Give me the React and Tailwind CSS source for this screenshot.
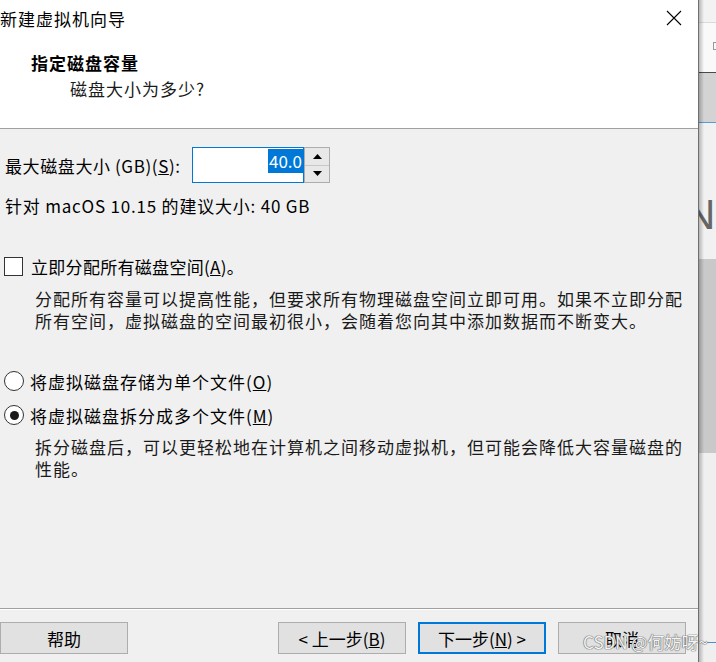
import React from "react";

function Arrow({ up }) {
  return (
    <svg width="9" height="5" viewBox="0 0 9 5">
      <path d={up ? "M0 5L4.5 0L9 5Z" : "M0 0L9 0L4.5 5Z"} fill="#000" />
    </svg>
  );
}

function Btn({ children, primary }) {
  return (
    <div
      className={`flex h-[32px] w-[128px] items-center justify-center bg-[#e1e1e1] text-[17px] leading-none ${
        primary ? "border-2 border-[#0078d7]" : "border border-[#adadad]"
      }`}
    >
      {children}
    </div>
  );
}

export default function App() {
  return (
    <div className="relative flex h-[662px] w-[716px] overflow-hidden bg-white font-['Noto_Sans_CJK_SC','Noto_Sans',sans-serif] text-black">
      {/* Dialog */}
      <div className="flex w-[699px] shrink-0 flex-col border-r border-[#6f6f6f]">
        {/* Title bar */}
        <div className="flex h-[36px] items-center justify-between bg-white">
          <span className="text-[17px] leading-none tracking-[1px]">新建虚拟机向导</span>
          <svg width="16" height="16" viewBox="0 0 16 16" className="mr-[16px]">
            <path d="M1 1L15 15M15 1L1 15" stroke="#000" strokeWidth="1.1" />
          </svg>
        </div>

        {/* Header */}
        <div className="h-[93px] border-b border-[#a0a0a0] bg-white pl-[31px] pt-[18px]">
          <div className="text-[17px] font-bold leading-[18px] tracking-[1px]">指定磁盘容量</div>
          <div className="mt-[8px] pl-[39px] text-[17px] leading-[18px] tracking-[1px] text-[#1a1a1a]">
            磁盘大小为多少?
          </div>
        </div>

        {/* Body */}
        <div className="flex flex-1 flex-col bg-[#f0f0f0]">
          <div className="mt-[18px] flex h-[36px] items-center pl-[5px]">
            <span className="w-[187px] text-[17px] leading-none tracking-[0.6px]">
              最大磁盘大小 (GB)(<u>S</u>):
            </span>
            <div className="flex h-[36px] w-[112px] justify-end border border-[#0078d7] bg-white pt-px">
              <span className="h-[24px] bg-[#0078d7] px-px text-[17px] leading-[24px] text-white">40.0</span>
            </div>
            <div className="flex h-[36px] w-[26px] flex-col border border-[#adadad] bg-[#e8e8e8]">
              <div className="flex flex-1 items-center justify-center border-b border-[#c8c8c8]">
                <Arrow up />
              </div>
              <div className="flex flex-1 items-center justify-center">
                <Arrow />
              </div>
            </div>
          </div>

          <div className="mt-[13px] pl-[5px] text-[17px] leading-[20px] tracking-[0.8px]">
            针对 macOS 10.15 的建议大小: 40 GB
          </div>

          <div className="mt-[40px] flex h-[20px] items-center pl-[4px]">
            <div className="h-[19px] w-[19px] border border-[#333] bg-white" />
            <span className="ml-[8px] text-[17px] leading-none tracking-[0.3px]">
              立即分配所有磁盘空间(<u>A</u>)。
            </span>
          </div>

          <div className="mt-[12px] pl-[35px] text-[17px] leading-[22px] tracking-[1px] text-[#1a1a1a]">
            <div>分配所有容量可以提高性能，但要求所有物理磁盘空间立即可用。如果不立即分配</div>
            <div>所有空间，虚拟磁盘的空间最初很小，会随着您向其中添加数据而不断变大。</div>
          </div>

          <div className="mt-[39px] flex h-[20px] items-center pl-[4px]">
            <div className="h-[20px] w-[20px] rounded-full border border-[#333] bg-white" />
            <span className="ml-[6px] text-[17px] leading-none tracking-[1px]">
              将虚拟磁盘存储为单个文件(<u>O</u>)
            </span>
          </div>

          <div className="mt-[14px] flex h-[20px] items-center pl-[4px]">
            <div className="flex h-[20px] w-[20px] items-center justify-center rounded-full border border-[#333] bg-white">
              <div className="h-[9px] w-[9px] rounded-full bg-[#1a1a1a]" />
            </div>
            <span className="ml-[6px] text-[17px] leading-none tracking-[1px]">
              将虚拟磁盘拆分成多个文件(<u>M</u>)
            </span>
          </div>

          <div className="mt-[11px] pl-[35px] text-[17px] leading-[22px] tracking-[1px] text-[#1a1a1a]">
            <div>拆分磁盘后，可以更轻松地在计算机之间移动虚拟机，但可能会降低大容量磁盘的</div>
            <div>性能。</div>
          </div>

          {/* Footer */}
          <div className="mt-auto h-px bg-[#a0a0a0]" />
          <div className="h-px bg-white" />
          <div className="flex pb-[8px] pr-[12px] pt-[12px]">
            <Btn>帮助</Btn>
            <div className="flex-1" />
            <div className="flex gap-[12px]">
              <Btn>
                &lt; 上一步(<u>B</u>)
              </Btn>
              <Btn primary>
                下一步(<u>N</u>) &gt;
              </Btn>
              <Btn>取消</Btn>
            </div>
          </div>
        </div>
      </div>

      {/* Window behind the dialog */}
      <div className="relative flex w-[17px] flex-col overflow-hidden">
        <div className="h-[22px] bg-[#f2f2f2]" />
        <div className="h-px bg-[#dadada]" />
        <div className="h-[49px] bg-[#f9f9f9] pl-[14px] pt-[19px]">
          <div className="h-[8px] w-[3px] border border-r-0 border-[#999]" />
        </div>
        <div className="h-px bg-[#4a4a4a]" />
        <div className="h-[49px] bg-[#d3d3d3]" />
        <div className="h-px bg-[#5b9bd5]" />
        <div className="h-[136px] bg-[#f1f1f1] pt-[71px]">
          <div className="ml-[-14px] font-['Liberation_Sans',sans-serif] text-[42px] leading-[42px] text-[#666]">N</div>
        </div>
        <div className="h-[194px] bg-[#c9c9c9]" />
        <div className="flex-1 bg-[#efefef] pt-[189px]">
          <div className="h-px bg-[#4f8fcf]" />
        </div>
        <div className="absolute inset-y-0 left-0 w-[5px] bg-linear-to-r from-black/25 to-transparent" />
      </div>

      {/* Watermark */}
      <div className="absolute left-[583px] top-[632px] text-[17px] leading-[20px] text-[#f4f4f4] [text-shadow:0_0_1px_#666,0_0_1px_#666,0_0_1px_#666]">
        CSDN @何妨呀~
      </div>
    </div>
  );
}
